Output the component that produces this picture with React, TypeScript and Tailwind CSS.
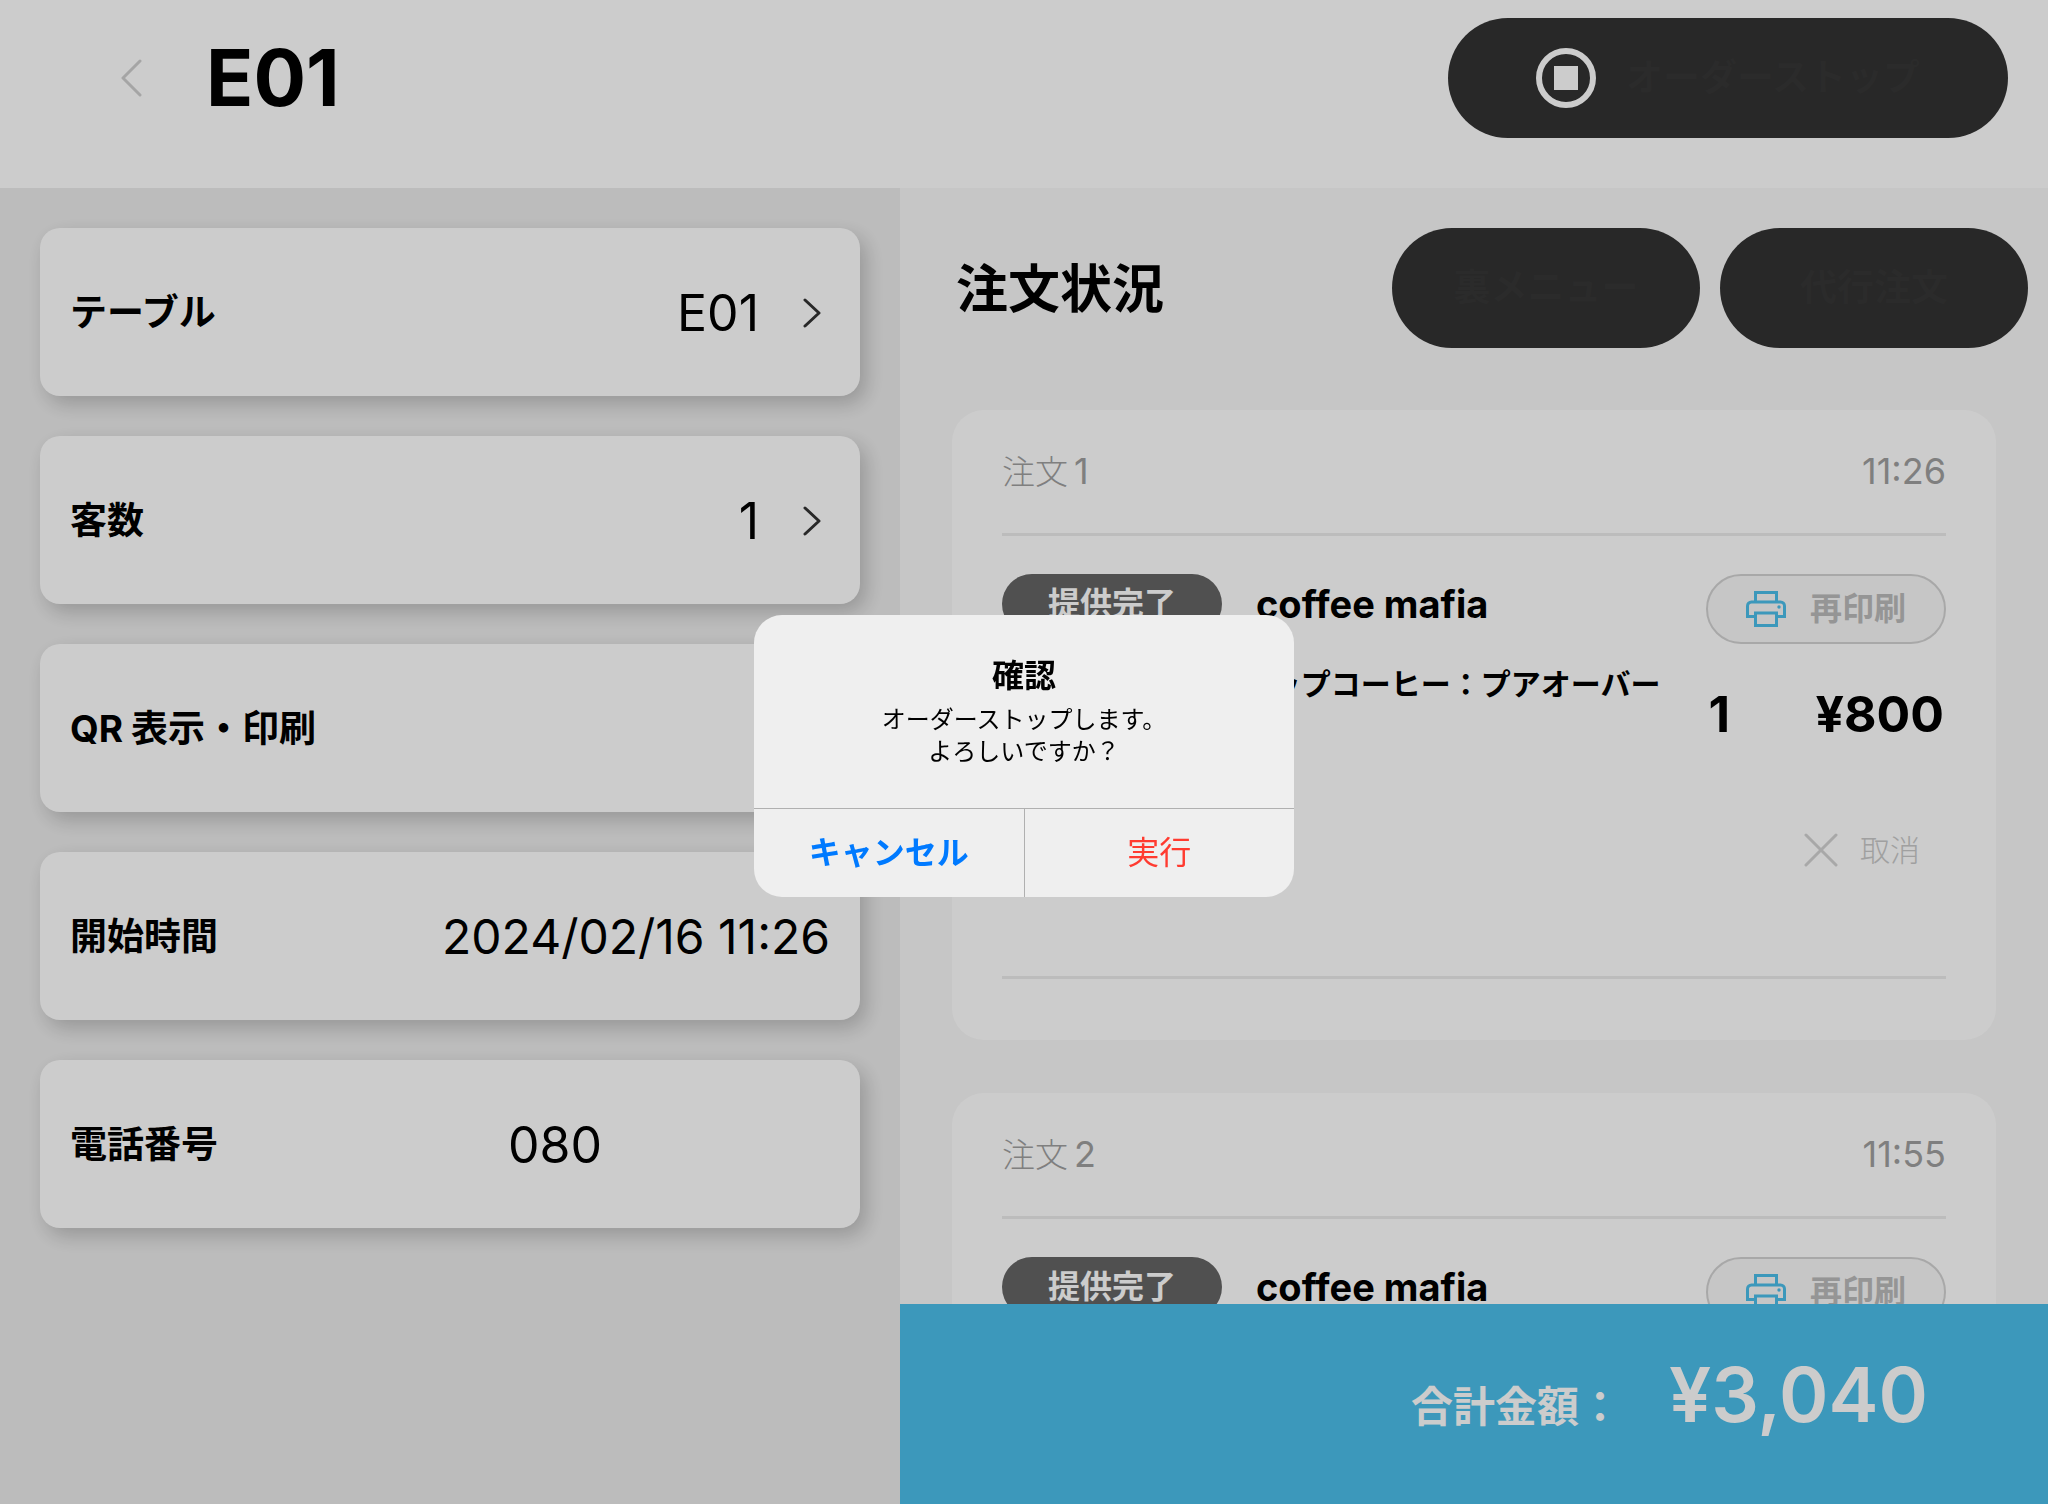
import { useState } from 'react'

const orders = [
  { id: 1, time: '11:26', shop: 'coffee mafia', item: 'ドリップコーヒー：プアオーバー', quantity: 1, price: 800 },
  { id: 2, time: '11:55', shop: 'coffee mafia', item: 'ドリップコーヒー：プアオーバー', quantity: 1, price: 800 },
]

const total = 3040

function ChevronRight() {
  return (
    <svg viewBox="0 0 18 30" className="w-[18px] h-[30px]" fill="none" stroke="#323232" strokeWidth="3" strokeLinecap="round" strokeLinejoin="round">
      <path d="M2 2l14 13L2 28" />
    </svg>
  )
}

function PrinterIcon() {
  return (
    <svg viewBox="0 0 40 36" className="w-10 h-9" fill="none" stroke="#4bbeea" strokeWidth="3">
      <path d="M9.5 11V1.500h21V11" />
      <path d="M9.500 25.500H1.500V15a4 4 0 0 1 4-4h29a4 4 0 0 1 4 4v10.500h-8" />
      <path d="M8 22h24" />
      <path d="M9.500 22v12.500h21V22" />
      <circle cx="33" cy="16" r="1.700" fill="#4bbeea" stroke="none" />
    </svg>
  )
}

function OrderCard({ order }: { order: (typeof orders)[number] }) {
  return (
    <article className="shrink-0 h-[630px] rounded-[32px] bg-white px-[50px] pt-8">
      <div className="flex items-center justify-between h-[94px] pb-[34px] border-b-[3px] border-[#ececec] text-[#9f9f9f]">
        <h3 className="text-[33px] font-light">注文<span className="pl-1.5 text-[36px] font-normal">{order.id}</span></h3>
        <time className="text-[36px]">{order.time}</time>
      </div>

      <div className="h-[443px] pt-[38px] border-b-[3px] border-[#ececec]">
        <div className="flex items-start">
          <span className="flex items-center justify-center w-[220px] h-[60px] rounded-full bg-[#656565] text-white text-[32px] font-bold">
            提供完了
          </span>
          <p className="flex-1 pl-[34px] text-[38px] leading-[60px] font-bold">{order.shop}</p>
          <button className="flex items-center justify-center gap-6 w-[240px] h-[70px] rounded-full border-2 border-[#d3d3d3] bg-[#f8f8f8] text-[#bbbbbb] text-[32px] font-bold">
            <PrinterIcon />
            再印刷
          </button>
        </div>
        <div className="flex items-center pt-3">
          <p className="flex-1 pb-[60px] pr-12 text-right text-[30px] leading-[56px] font-semibold">{order.item}</p>
          <span className="text-[50px] leading-[60px] font-bold">{order.quantity}</span>
          <span className="w-[216px] pr-0.5 text-right text-[50px] leading-[60px] font-bold">¥{order.price}</span>
        </div>
        <button className="flex items-center gap-[22px] mt-[38px] ml-auto mr-[26px] h-20 text-[#c8c8c8] text-[30px] font-light">
          <svg viewBox="0 0 34 34" className="w-[34px] h-[34px]" stroke="#d3d3d3" strokeWidth="3" strokeLinecap="round">
            <path d="M2 2l30 30M32 2L2 32" />
          </svg>
          取消
        </button>
      </div>
    </article>
  )
}

function ConfirmDialog({ onClose }: { onClose: () => void }) {
  return (
    <div className="fixed inset-0 flex items-center justify-center pt-2 bg-black/20">
      <div role="alertdialog" aria-labelledby="confirm-title" className="w-[540px] rounded-[28px] overflow-hidden bg-[#efefef] text-center">
        <div className="h-[193px] pt-9">
          <h2 id="confirm-title" className="pb-[3px] text-[32px] leading-[50px] font-bold">確認</h2>
          <p className="text-[24px] leading-8">
            オーダーストップします。
            <br />
            よろしいですか？
          </p>
        </div>
        <div className="flex h-[89px] border-t border-[#b0b0b0] text-[32px]">
          <button onClick={onClose} className="flex-1 border-r border-[#b0b0b0] text-[#007aff] font-bold">キャンセル</button>
          <button onClick={onClose} className="flex-1 text-[#ff3b30]">実行</button>
        </div>
      </div>
    </div>
  )
}

export default function App() {
  const [confirming, setConfirming] = useState(true)
  const [phone, setPhone] = useState('080')
  const card = 'flex items-center justify-between w-full h-[168px] px-[30px] pt-0.5 rounded-[20px] bg-white shadow-[6px_8px_20px_rgba(0,0,0,0.2)]'

  return (
    <div lang="ja" className="flex flex-col h-screen overflow-hidden bg-white text-black font-['Inter','Noto_Sans_CJK_JP',sans-serif]">
      <header className="flex items-center justify-between shrink-0 h-[188px] pb-8 pl-[120px] pr-10">
        <div className="flex items-center gap-16">
          <button aria-label="戻る">
            <svg viewBox="0 0 22 38" className="w-[22px] h-[38px]" fill="none" stroke="#cfcfcf" strokeWidth="3" strokeLinecap="round" strokeLinejoin="round">
              <path d="M20 2L3 19l17 17" />
            </svg>
          </button>
          <h1 className="text-[78px] leading-none font-bold">E01</h1>
        </div>
        <button
          onClick={() => setConfirming(true)}
          className="flex items-center justify-center gap-[30px] w-[560px] h-[120px] rounded-full bg-[#323232] text-[#363636] text-[37px] font-bold"
        >
          <svg viewBox="0 0 60 60" className="w-[60px] h-[60px]">
            <circle cx="30" cy="30" r="27" fill="none" stroke="#fff" strokeWidth="6" />
            <rect x="18" y="18" width="24" height="24" fill="#fff" />
          </svg>
          オーダーストップ
        </button>
      </header>

      <main className="flex-1 min-h-0 grid grid-cols-[225fr_287fr]">
        <section className="flex flex-col gap-10 p-10 bg-[#ececec] text-[37px] font-bold">
          <button className={card}>
            テーブル
            <span className="flex items-center gap-11 pr-[9px] text-[50px] font-normal">E01<ChevronRight /></span>
          </button>
          <button className={card}>
            客数
            <span className="flex items-center gap-11 pr-[9px] text-[50px] font-normal">1<ChevronRight /></span>
          </button>
          <button className={card}>
            <span className="flex gap-2"><span>QR</span>表示・印刷</span>
          </button>
          <div className={card}>
            開始時間
            <span className="text-[48px] font-normal">2024/02/16 11:26</span>
          </div>
          <div className={card}>
            <label htmlFor="phone">電話番号</label>
            <input
              id="phone"
              type="tel"
              value={phone}
              onChange={e => setPhone(e.target.value)}
              className="w-[322px] text-[50px] font-normal outline-none"
            />
          </div>
        </section>

        <section className="flex flex-col min-h-0 bg-[#f8f8f8]">
          <div className="flex items-center shrink-0 gap-5 pt-10 pl-14 pr-5">
            <h2 className="flex-1 pt-1 text-[52px] font-bold">注文状況</h2>
            <button className="w-[308px] h-[120px] rounded-full bg-[#323232] text-[#363636] text-[37px] font-bold">裏メニュー</button>
            <button className="w-[308px] h-[120px] rounded-full bg-[#323232] text-[#363636] text-[37px] font-bold">代行注文</button>
          </div>

          <div className="flex-1 min-h-0 flex flex-col gap-[53px] px-[52px] pt-[62px] overflow-hidden">
            {orders.map(order => (
              <OrderCard key={order.id} order={order} />
            ))}
          </div>

          <footer className="flex items-center shrink-0 h-[200px] pb-3.5 pr-[120px] bg-[#4bbeea] text-white">
            <p className="flex-1 flex items-baseline justify-end gap-12">
              <span className="text-[42px] font-bold">合計金額：</span>
              <span className="text-[75px] leading-none font-semibold">¥{total.toLocaleString()}</span>
            </p>
          </footer>
        </section>
      </main>

      {confirming && <ConfirmDialog onClose={() => setConfirming(false)} />}
    </div>
  )
}
